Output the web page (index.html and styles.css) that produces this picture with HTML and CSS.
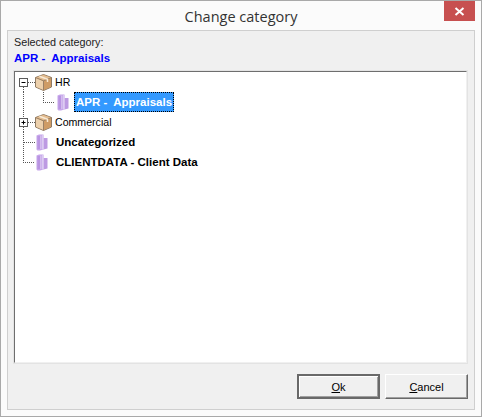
FILE: index.html
```html
<!DOCTYPE html>
<html lang="en">
<head>
<meta charset="utf-8">
<title>Change category</title>
<link rel="stylesheet" href="styles.css">
</head>
<body>
<svg class="defs" width="0" height="0" aria-hidden="true">
  <defs>
    <symbol id="box" viewBox="0 0 17 17">
      <path d="M8.500 .5 16.500 3.500V13L8.500 16.500 .5 13V3.500z" fill="#d8a873" stroke="#8f7a63"/>
      <path d="M1 4l7.500 3V16L1 12.800z" fill="#ecd0ac"/>
      <path d="M8.500 7 16 4v8.800L8.500 16z" fill="#cf9c66"/>
      <path d="M1 3.500 8.500 1 16 3.500 8.500 6.500z" fill="#e4bd90"/>
      <path d="M.5 3.500 8.500 6.800 16.500 3.500M8.500 6.800V16.500" fill="none" stroke="#9a8066"/>
      <path d="M4.500 2.200 12.500 5.300V8" fill="none" stroke="#f8ead6" stroke-width="1.500"/>
    </symbol>
    <symbol id="book" viewBox="0 0 14 17">
      <path d="M1.500 1.500 4 .5H8.500V15.500L5 16.500H2.500L1.500 15.500z" fill="#c6a6ea"/>
      <path d="M2.500 2H5V15H2.500z" fill="#b994e2"/>
      <path d="M5 1.500H6.500V15H5z" fill="#d4bdee"/>
      <path d="M8.500 4H12.500V14.500L8.500 15.500z" fill="#bd9ae2"/>
      <path d="M7 1H8.500V15.500H7z" fill="#dccbf2"/>
    </symbol>
  </defs>
</svg>
<div class="window">
  <header class="titlebar">
    <h1 class="title">Change category</h1>
    <div class="close">
      <svg width="11" height="9" viewBox="0 0 11 9"><path d="M1.500 1 9.500 8M9.500 1 1.500 8" stroke="#fff" stroke-width="2" fill="none"/></svg>
    </div>
  </header>
  <main class="panel">
    <div class="caption">Selected category:</div>
    <div class="selected">APR -&nbsp; Appraisals</div>
    <div class="tree">
      <div class="row">
        <svg class="gut" width="40" height="20">
          <path class="dots" d="M8.500 15V20M13 10.500H20"/>
          <rect x="4.500" y="6.500" width="8" height="8" fill="#fff" stroke="#5a5a5a"/>
          <path d="M6.500 10.500h4" stroke="#000"/>
          <use href="#box" x="20" y="2" width="17" height="17"/>
        </svg>
        <span class="label">HR</span>
      </div>
      <div class="row">
        <svg class="gut" width="59" height="20">
          <path class="dots" d="M8.500 0V20M28.500 0V10.500H40"/>
          <use href="#book" x="41" y="2" width="14" height="17"/>
        </svg>
        <span class="label bold current">APR -&nbsp; Appraisals</span>
      </div>
      <div class="row">
        <svg class="gut" width="40" height="20">
          <path class="dots" d="M8.500 0V6M8.500 15V20M13 10.500H20"/>
          <rect x="4.500" y="6.500" width="8" height="8" fill="#fff" stroke="#5a5a5a"/>
          <path d="M6.500 10.500h4M8.500 8.500v4" stroke="#000"/>
          <use href="#box" x="20" y="2" width="17" height="17"/>
        </svg>
        <span class="label">Commercial</span>
      </div>
      <div class="row">
        <svg class="gut" width="41" height="20">
          <path class="dots" d="M8.500 0V20M8.500 10.500H20"/>
          <use href="#book" x="20" y="2" width="14" height="17"/>
        </svg>
        <span class="label bold">Uncategorized</span>
      </div>
      <div class="row">
        <svg class="gut" width="41" height="20">
          <path class="dots" d="M8.500 0V10.500H20"/>
          <use href="#book" x="20" y="2" width="14" height="17"/>
        </svg>
        <span class="label bold">CLIENTDATA - Client Data</span>
      </div>
    </div>
    <footer class="actions">
      <button class="btn default" type="button"><u>O</u>k</button>
      <button class="btn" type="button"><u>C</u>ancel</button>
    </footer>
  </main>
</div>
</body>
</html>
```
FILE: styles.css
```css
* { box-sizing: border-box; }
html, body { margin: 0; height: 100%; }
body { width: 482px; height: 417px; overflow: hidden; font-family: "Liberation Sans", Arial, sans-serif; font-size: 10.6px; color: #000; }
.defs { position: absolute; }
.window { width: 482px; height: 417px; border: 1px solid #a9a9a9; background: #fbfbfb; display: flex; flex-direction: column; padding: 0 6px 6px; }
.titlebar { height: 29px; flex: none; position: relative; display: flex; justify-content: center; align-items: center; }
.title { margin: 0; font: 400 14.5px "Open Sans", sans-serif; color: #333; padding-top: 1px; }
.close { position: absolute; top: 0; right: 0; width: 31px; height: 20px; background: #c75050; display: flex; align-items: center; justify-content: center; }
.panel { flex: 1; background: #f0f0f0; border: 1px solid #cfcfcf; padding: 4px 6px 10px 5px; display: flex; flex-direction: column; }
.caption { height: 15px; line-height: 15px; color: #222; padding-left: 1px; font-size: 10.8px; }
.selected { height: 16px; line-height: 16px; font-weight: 700; font-size: 11.5px; color: #0000ff; margin-bottom: 4px; padding-left: 1px; }
.tree { height: 294px; background: #fff; border: 2px solid; border-color: #6e6e6e #f0f0f0 #f0f0f0 #6e6e6e; outline: 1px solid #e3e3e3; outline-offset: -1px; flex: none; }
.row { height: 20px; display: flex; align-items: center; }
.gut { flex: none; display: block; }
.dots { fill: none; stroke: #555; stroke-dasharray: 1 1; shape-rendering: crispEdges; }
.label { white-space: nowrap; line-height: 20px; }
.bold { font-weight: 700; font-size: 11.5px; }
.current { background: #3399ff; color: #fff; padding: 0 2px; outline: 1px dotted #000; outline-offset: -1px; }
.actions { display: flex; justify-content: flex-end; gap: 5px; margin-top: auto; }
.btn { width: 83px; height: 25px; font: 11px "Liberation Sans", Arial, sans-serif; color: #000; background: #f0f0f0; border: 1px solid; border-color: #fff #696969 #696969 #fff; box-shadow: inset -1px -1px 0 #a0a0a0; padding: 0; }
.btn.default { border: 2px solid; border-color: #696969; box-shadow: inset 1px 1px 0 #fff, inset -1px -1px 0 #a0a0a0; }
```
